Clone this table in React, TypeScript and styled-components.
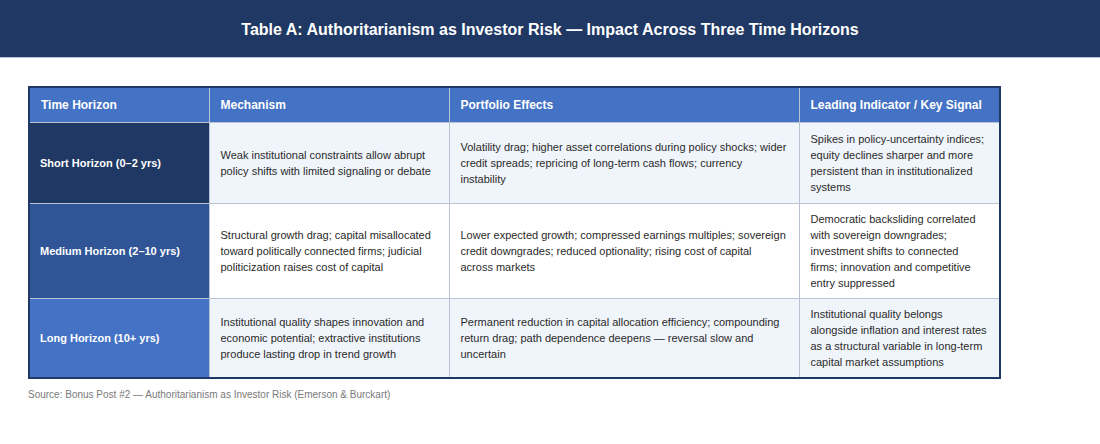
import React from 'react';
import styled, { createGlobalStyle } from 'styled-components';

const GlobalStyle = createGlobalStyle`
  html, body {
    margin: 0;
    padding: 0;
    background: #ffffff;
    font-family: "Liberation Sans", Arial, sans-serif;
  }
`;

const Page = styled.div`
  width: 1100px;
  height: 444px;
  background: #ffffff;
`;

const TitleBar = styled.header`
  height: 57px;
  background: #1f3864;
  border-bottom: 1px solid #b7c3da;
  display: flex;
  align-items: center;
  justify-content: center;
`;

const Title = styled.h1`
  margin: 0;
  padding-top: 2px;
  color: #ffffff;
  font-size: 16px;
  font-weight: 700;
`;

const Body = styled.div`
  padding: 28px 28px 0;
`;

const Table = styled.table`
  border-collapse: collapse;
  table-layout: fixed;
  width: 971px;
  border: 2px solid #1f3864;
`;

const HeadCell = styled.th<{ $w: number }>`
  width: ${(p) => p.$w}px;
  height: 35px;
  box-sizing: border-box;
  background: #4472c4;
  color: #ffffff;
  font-size: 12px;
  font-weight: 700;
  text-align: left;
  padding: 0 11px;
  border: 1px solid #b9c2d2;
  border-top: none;
`;

const Row = styled.tr<{ $alt: boolean }>`
  background: ${(p) => (p.$alt ? '#f0f5fb' : '#ffffff')};
`;

const LabelCell = styled.th<{ $tone: string }>`
  background: ${(p) => p.$tone};
  color: #ffffff;
  font-size: 11px;
  font-weight: 700;
  text-align: left;
  padding: 0 10px;
  border: 1px solid #b9c2d2;
  border-left: none;
`;

const Cell = styled.td<{ $h: number }>`
  height: ${(p) => p.$h}px;
  box-sizing: border-box;
  color: #2a2a2a;
  font-size: 11px;
  line-height: 16px;
  padding: 6px 12px 6px 11px;
  vertical-align: middle;
  border: 1px solid #b9c2d2;
`;

const Source = styled.p`
  margin: 10px 0 0;
  color: #7a7a7a;
  font-size: 10px;
`;

const columns = [
  { label: 'Time Horizon', w: 180 },
  { label: 'Mechanism', w: 240 },
  { label: 'Portfolio Effects', w: 350 },
  { label: 'Leading Indicator / Key Signal', w: 201 },
];

const rows = [
  {
    label: 'Short Horizon (0–2 yrs)',
    tone: '#1f3864',
    h: 81,
    cells: [
      'Weak institutional constraints allow abrupt policy shifts with limited signaling or debate',
      'Volatility drag; higher asset correlations during policy shocks; wider credit spreads; repricing of long-term cash flows; currency instability',
      'Spikes in policy-uncertainty indices; equity declines sharper and more persistent than in institutionalized systems',
    ],
  },
  {
    label: 'Medium Horizon (2–10 yrs)',
    tone: '#2f5597',
    h: 95,
    cells: [
      'Structural growth drag; capital misallocated toward politically connected firms; judicial politicization raises cost of capital',
      'Lower expected growth; compressed earnings multiples; sovereign credit downgrades; reduced optionality; rising cost of capital across markets',
      'Democratic backsliding correlated with sovereign downgrades; investment shifts to connected firms; innovation and competitive entry suppressed',
    ],
  },
  {
    label: 'Long Horizon (10+ yrs)',
    tone: '#4472c4',
    h: 80,
    cells: [
      'Institutional quality shapes innovation and economic potential; extractive institutions produce lasting drop in trend growth',
      'Permanent reduction in capital allocation efficiency; compounding return drag; path dependence deepens — reversal slow and uncertain',
      'Institutional quality belongs alongside inflation and interest rates as a structural variable in long-term capital market assumptions',
    ],
  },
];

export default function App() {
  return (
    <Page>
      <GlobalStyle />
      <TitleBar>
        <Title>Table A: Authoritarianism as Investor Risk — Impact Across Three Time Horizons</Title>
      </TitleBar>
      <Body>
        <Table>
          <thead>
            <tr>
              {columns.map((c) => (
                <HeadCell key={c.label} $w={c.w}>
                  {c.label}
                </HeadCell>
              ))}
            </tr>
          </thead>
          <tbody>
            {rows.map((r, i) => (
              <Row key={r.label} $alt={i % 2 === 0}>
                <LabelCell $tone={r.tone}>{r.label}</LabelCell>
                {r.cells.map((text, j) => (
                  <Cell key={j} $h={r.h}>
                    {text}
                  </Cell>
                ))}
              </Row>
            ))}
          </tbody>
        </Table>
        <Source>Source: Bonus Post #2 — Authoritarianism as Investor Risk (Emerson &amp; Burckart)</Source>
      </Body>
    </Page>
  );
}
